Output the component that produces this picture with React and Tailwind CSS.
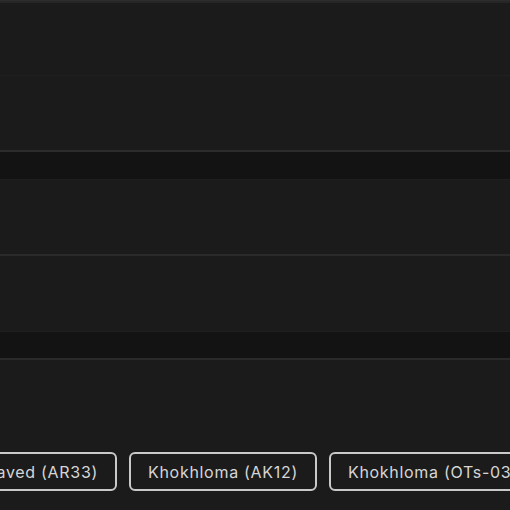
export default function App() {
  const font = { fontFamily: "Inter, 'Open Sans', sans-serif" };
  const btn =
    "shrink-0 h-[39px] px-[17px] flex items-center rounded-[6px] border-2 border-[#c9c9c9] text-[#d6d6d6] text-[16px] tracking-[0.7px] whitespace-nowrap";
  return (
    <div className="w-[510px] h-[510px] overflow-hidden bg-[#1b1b1b] flex flex-col" style={font}>
      <div className="h-[3px] shrink-0 bg-[#262626] border-t border-[#2c2c2c]" />
      <div className="h-[73px] shrink-0 border-b border-[#202020]" />
      <div className="h-[76px] shrink-0 border-b-2 border-[#2c2c2c]" />
      <div className="h-[28px] shrink-0 bg-[#131313] border-b border-[#1f1f1f]" />
      <div className="h-[76px] shrink-0 border-b-2 border-[#2a2a2a]" />
      <div className="h-[76px] shrink-0 border-b border-[#1f1f1f]" />
      <div className="h-[28px] shrink-0 bg-[#131313] border-b-2 border-[#2a2a2a]" />
      <div className="flex-1 flex items-end pb-[19px] overflow-hidden">
        <div className="flex gap-[12px] shrink-0">
          <div className="w-[117px] shrink-0 flex justify-end">
            <div className={btn}>Engraved (AR33)</div>
          </div>
          <div className={btn}>Khokhloma (AK12)</div>
          <div className={btn}>Khokhloma (OTs-03)</div>
        </div>
      </div>
    </div>
  );
}
